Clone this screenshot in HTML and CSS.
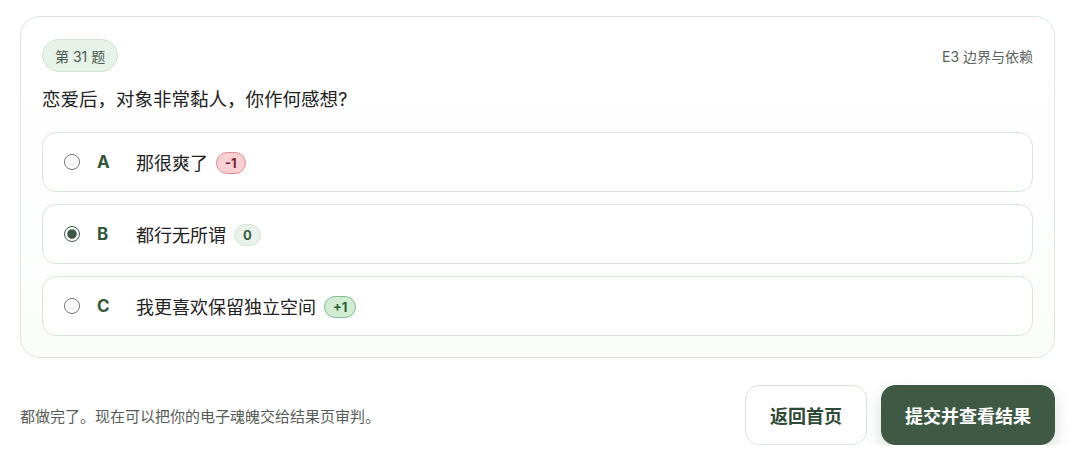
FILE: index.html
```html
<!DOCTYPE html>
<html lang="zh-CN">
<head>
    <meta charset="UTF-8">
    <meta name="viewport" content="width=device-width, initial-scale=1.0">
    <title>第 31 题</title>
    <link rel="stylesheet" href="styles.css">
</head>
<body>
    <div class="page">
        <div class="card">
            <div class="card-head">
                <span class="chip">第 31 题</span>
                <span class="dim">E3 边界与依赖</span>
            </div>
            <p class="question">恋爱后，对象非常黏人，你作何感想?</p>

            <div class="options">
                <label class="option">
                    <input type="radio" name="q31" value="A">
                    <span class="letter">A</span>
                    <span class="text">那很爽了</span>
                    <span class="score neg">-1</span>
                </label>
                <label class="option">
                    <input type="radio" name="q31" value="B" checked>
                    <span class="letter">B</span>
                    <span class="text">都行无所谓</span>
                    <span class="score zero">0</span>
                </label>
                <label class="option">
                    <input type="radio" name="q31" value="C">
                    <span class="letter">C</span>
                    <span class="text">我更喜欢保留独立空间</span>
                    <span class="score pos">+1</span>
                </label>
            </div>
        </div>

        <div class="footer">
            <p class="hint">都做完了。现在可以把你的电子魂魄交给结果页审判。</p>
            <div class="actions">
                <button type="button" class="btn">返回首页</button>
                <button type="button" class="btn primary">提交并查看结果</button>
            </div>
        </div>
    </div>
</body>
</html>
```

FILE: styles.css
```css
body {
    margin: 0;
    background: #fff;
    font-family: Inter, "Noto Sans CJK SC", sans-serif;
    color: #1f2420;
}
.page {
    padding: 16px 25px 0 20px;
}
.card {
    border: 1px solid #d8e8da;
    border-radius: 20px;
    padding: 22px 21px 21px 21px;
    background: linear-gradient(180deg, #ffffff 0%, #fbfdfb 100%);
}
.card-head {
    display: flex;
    justify-content: space-between;
    align-items: center;
}
.chip {
    display: inline-flex;
    align-items: center;
    height: 31px;
    padding: 0 12px;
    border: 1px solid #cfe4d3;
    border-radius: 999px;
    background: #e7f3e9;
    font-size: 14px;
    color: #4d5a50;
}
.dim {
    font-size: 14px;
    color: #5a625c;
}
.question {
    margin: 14px 0 19px;
    font-size: 18.5px;
    line-height: 27px;
    color: #222;
}
.options {
    display: flex;
    flex-direction: column;
    gap: 12px;
}
.option {
    display: flex;
    align-items: center;
    height: 58px;
    padding: 0 21px;
    border: 1px solid #d6e7d8;
    border-radius: 14px;
    background: #fff;
    cursor: pointer;
}
.option input {
    margin: 0;
    width: 16px;
    height: 16px;
    accent-color: #3e5a44;
}
.letter {
    box-sizing: border-box;
    width: 56px;
    padding-left: 17px;
    font-size: 17px;
    font-weight: 700;
    color: #34573c;
}
.text {
    font-size: 18px;
    color: #222;
}
.score {
    margin-left: 8px;
    margin-top: 2px;
    padding: 0 8px;
    height: 20px;
    line-height: 20px;
    border-radius: 999px;
    font-size: 13px;
    font-weight: 700;
}
.neg {
    background: #f7d0d4;
    border: 1px solid #df8c95;
    color: #7a2230;
}
.zero {
    background: #e8f2ea;
    border: 1px solid #d5e6d8;
    color: #3a5a41;
}
.pos {
    background: #d2ecd4;
    border: 1px solid #83c28d;
    color: #2d5e35;
}
.footer {
    display: flex;
    justify-content: space-between;
    align-items: center;
    margin-top: 27px;
}
.hint {
    margin: 0;
    font-size: 15px;
    color: #555c57;
}
.actions {
    display: flex;
    gap: 14px;
}
.btn {
    height: 60px;
    padding: 0 24px;
    border: 1px solid #d6e7d8;
    border-radius: 14px;
    background: #fff;
    font-family: inherit;
    font-size: 18px;
    font-weight: 700;
    color: #2f4a36;
    cursor: pointer;
}
.primary {
    padding: 0 23px;
    background: #3e5a44;
    border-color: #3e5a44;
    color: #fff;
    box-shadow: 0 8px 18px rgba(40,70,48,0.18);
}
```
